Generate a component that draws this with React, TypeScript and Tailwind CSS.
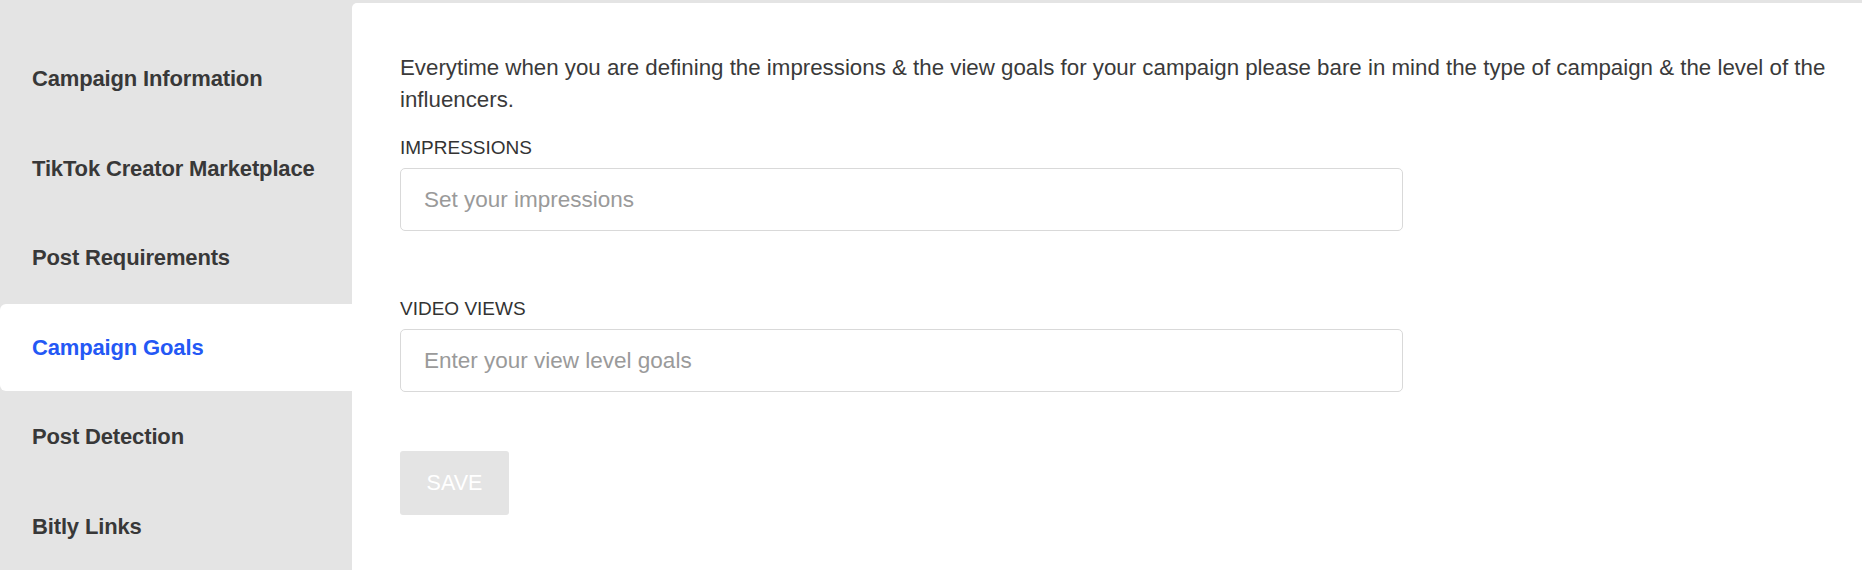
import React from "react";

const items = [
  "Campaign Information",
  "TikTok Creator Marketplace",
  "Post Requirements",
  "Campaign Goals",
  "Post Detection",
  "Bitly Links",
];

export default function App() {
  return (
    <div
      className="flex h-[570px] w-full bg-[#e4e4e4] overflow-hidden"
      style={{ fontFamily: '"Liberation Sans", Arial, sans-serif' }}
    >
      <nav className="flex w-[352px] shrink-0 flex-col gap-[2.6px] pt-[35px]">
        {items.map((label) => {
          const active = label === "Campaign Goals";
          return (
            <div
              key={label}
              className={
                active
                  ? "flex h-[87px] items-center rounded-l-[6px] bg-white pl-[32px] text-[22px] font-bold tracking-[-0.15px] text-[#2458f5]"
                  : "flex h-[87px] items-center pl-[32px] text-[22px] font-bold tracking-[-0.15px] text-[#383838]"
              }
            >
              {label}
            </div>
          );
        })}
      </nav>
      <main className="mt-[3px] flex-1 rounded-tl-[5px] bg-white pl-[48px] pr-[24px] pt-[49px]">
        <p className="text-[22.3px] leading-[32px] text-[#3a3a3a]">
          Everytime when you are defining the impressions &amp; the view goals for your campaign please bare in mind the type of campaign &amp; the level of the influencers.
        </p>
        <div className="mt-[21px] flex w-[1003px] flex-col">
          <label className="text-[19px] leading-[22px] font-medium text-[#333333]">IMPRESSIONS</label>
          <div className="mt-[9px] flex h-[63px] items-center rounded-[5px] border border-[#d9d9d9] pl-[23px] text-[22.5px] text-[#9a9a9a]">
            Set your impressions
          </div>
          <label className="mt-[67px] text-[19px] leading-[22px] font-medium text-[#333333]">VIDEO VIEWS</label>
          <div className="mt-[9px] flex h-[63px] items-center rounded-[5px] border border-[#d9d9d9] pl-[23px] text-[22.5px] text-[#9a9a9a]">
            Enter your view level goals
          </div>
          <div className="mt-[59px]">
            <button className="flex h-[64px] w-[109px] items-center justify-center rounded-[3px] bg-[#e4e4e4] text-[21.5px] text-white">
              SAVE
            </button>
          </div>
        </div>
      </main>
    </div>
  );
}
